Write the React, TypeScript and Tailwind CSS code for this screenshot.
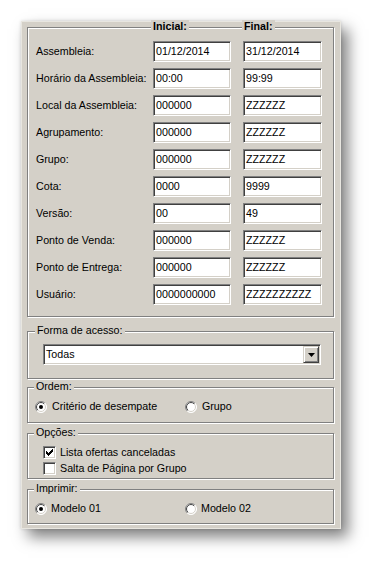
import { useId } from "react";

const rows = [
  ["Assembleia:", "01/12/2014", "31/12/2014"],
  ["Horário da Assembleia:", "00:00", "99:99"],
  ["Local da Assembleia:", "000000", "ZZZZZZ"],
  ["Agrupamento:", "000000", "ZZZZZZ"],
  ["Grupo:", "000000", "ZZZZZZ"],
  ["Cota:", "0000", "9999"],
  ["Versão:", "00", "49"],
  ["Ponto de Venda:", "000000", "ZZZZZZ"],
  ["Ponto de Entrega:", "000000", "ZZZZZZ"],
  ["Usuário:", "0000000000", "ZZZZZZZZZZ"],
];

// classic etched group box; title sits on the top line
function GroupBox({ title, titleLeft, className, children }: { title?: string; titleLeft?: string; className?: string; children: React.ReactNode }) {
  return (
    <div className={`relative w-[307px] border border-[#808080] shadow-[inset_1px_1px_0_#fff,1px_1px_0_#fff] ${className ?? ""}`}>
      {title && (
        <span className={`absolute top-[-8px] ${titleLeft ?? "left-[6px]"} bg-[#d4d0c8] px-[2px] leading-[13px]`}>{title}</span>
      )}
      {children}
    </div>
  );
}

function Field({ value, width }: { value: string; width: string }) {
  return (
    <div className={`${width} h-[21px] flex items-center overflow-hidden whitespace-nowrap bg-white border border-t-[#808080] border-l-[#808080] border-b-white border-r-white shadow-[inset_1px_1px_0_#404040,inset_-1px_-1px_0_#d4d0c8] pl-[2px]`}>
      {value}
    </div>
  );
}

function Radio({ checked }: { checked?: boolean }) {
  const id = useId().replace(/:/g, "");
  return (
    <svg width="12" height="12" viewBox="0 0 12 12" className="shrink-0">
      <defs>
        <linearGradient id={`o${id}`} x1="0" y1="0" x2="1" y2="1">
          <stop offset="0.5" stopColor="#808080" />
          <stop offset="0.5" stopColor="#ffffff" />
        </linearGradient>
        <linearGradient id={`i${id}`} x1="0" y1="0" x2="1" y2="1">
          <stop offset="0.5" stopColor="#404040" />
          <stop offset="0.5" stopColor="#d4d0c8" />
        </linearGradient>
      </defs>
      <circle cx="6" cy="6" r="5.5" fill="#fff" stroke={`url(#o${id})`} />
      <circle cx="6" cy="6" r="4.5" fill="#fff" stroke={`url(#i${id})`} />
      {checked && <circle cx="6" cy="6" r="2" fill="#000" />}
    </svg>
  );
}

function Checkbox({ checked }: { checked?: boolean }) {
  const cols = [2, 3, 4, 3, 2, 1, 0];
  return (
    <div className="w-[13px] h-[13px] shrink-0 bg-white border border-t-[#808080] border-l-[#808080] border-b-white border-r-white shadow-[inset_1px_1px_0_#404040,inset_-1px_-1px_0_#d4d0c8]">
      {checked && (
        <svg width="11" height="11" viewBox="0 0 11 11" className="block">
          {cols.map((y, x) => (
            <rect key={x} x={x + 2} y={y + 2} width="1" height="3" fill="#000" />
          ))}
        </svg>
      )}
    </div>
  );
}

export default function App() {
  return (
    <div className="min-h-[571px] bg-white pt-[21px] pl-[21px] font-['Liberation_Sans',Arial,sans-serif] text-[10.7px] text-black">
      <div className="w-[320px] h-[508px] bg-[#d4d0c8] border border-[#e8e6e0] pt-[5px] pl-[5px] shadow-[7px_8px_14px_rgba(0,0,0,0.5),0_0_3px_rgba(0,0,0,0.15)] flex flex-col">
        <GroupBox className="pt-[13px] pb-[11px] pl-[8px]">
          <span className="absolute top-[-8px] left-[123px] bg-[#d4d0c8] px-[2px] leading-[13px] font-bold">Inicial:</span>
          <span className="absolute top-[-8px] left-[214px] bg-[#d4d0c8] px-[2px] leading-[13px] font-bold">Final:</span>
          <div className="flex flex-col gap-[6px]">
            {rows.map(([label, a, b]) => (
              <div key={label} className="flex items-center">
                <div className="w-[117px] whitespace-nowrap">{label}</div>
                <Field value={a} width="w-[78px]" />
                <div className="w-[12px]" />
                <Field value={b} width="w-[79px]" />
              </div>
            ))}
          </div>
        </GroupBox>

        <GroupBox title="Forma de acesso:" titleLeft="left-[7px]" className="mt-[14px] pt-[12px] pb-[13px] pl-[15px]">
          <div className="w-[278px] h-[21px] flex items-center bg-white border border-t-[#808080] border-l-[#808080] border-b-white border-r-white shadow-[inset_1px_1px_0_#404040,inset_-1px_-1px_0_#d4d0c8] pl-[2px] pr-[1px]">
            <span className="flex-1">Todas</span>
            <div className="w-[16px] h-[17px] flex items-center justify-center bg-[#d4d0c8] border border-t-[#d4d0c8] border-l-[#d4d0c8] border-b-[#404040] border-r-[#404040] shadow-[inset_1px_1px_0_#fff,inset_-1px_-1px_0_#808080]">
              <svg width="7" height="4" viewBox="0 0 7 4"><path d="M0 0h7L3.5 4z" fill="#000" /></svg>
            </div>
          </div>
        </GroupBox>

        <GroupBox title="Ordem:" className="mt-[8px] pt-[12px] pb-[9px] pl-[7px]">
          <div className="flex items-center h-[13px]">
            <div className="w-[150px] flex items-center gap-[5px]"><Radio checked />Critério de desempate</div>
            <div className="flex items-center gap-[5px]"><Radio />Grupo</div>
          </div>
        </GroupBox>

        <GroupBox title="Opções:" className="mt-[10px] pt-[12px] pb-[3px] pl-[15px]">
          <div className="flex flex-col gap-[3px]">
            <div className="flex items-center gap-[4px] h-[13px]"><Checkbox checked />Lista ofertas canceladas</div>
            <div className="flex items-center gap-[4px] h-[13px]"><Checkbox />Salta de Página por Grupo</div>
          </div>
        </GroupBox>

        <GroupBox title="Imprimir:" className="mt-[10px] pt-[12px] pb-[8px] pl-[7px]">
          <div className="flex items-center h-[13px]">
            <div className="w-[150px] flex items-center gap-[4px]"><Radio checked />Modelo 01</div>
            <div className="flex items-center gap-[4px]"><Radio />Modelo 02</div>
          </div>
        </GroupBox>
      </div>
    </div>
  );
}
